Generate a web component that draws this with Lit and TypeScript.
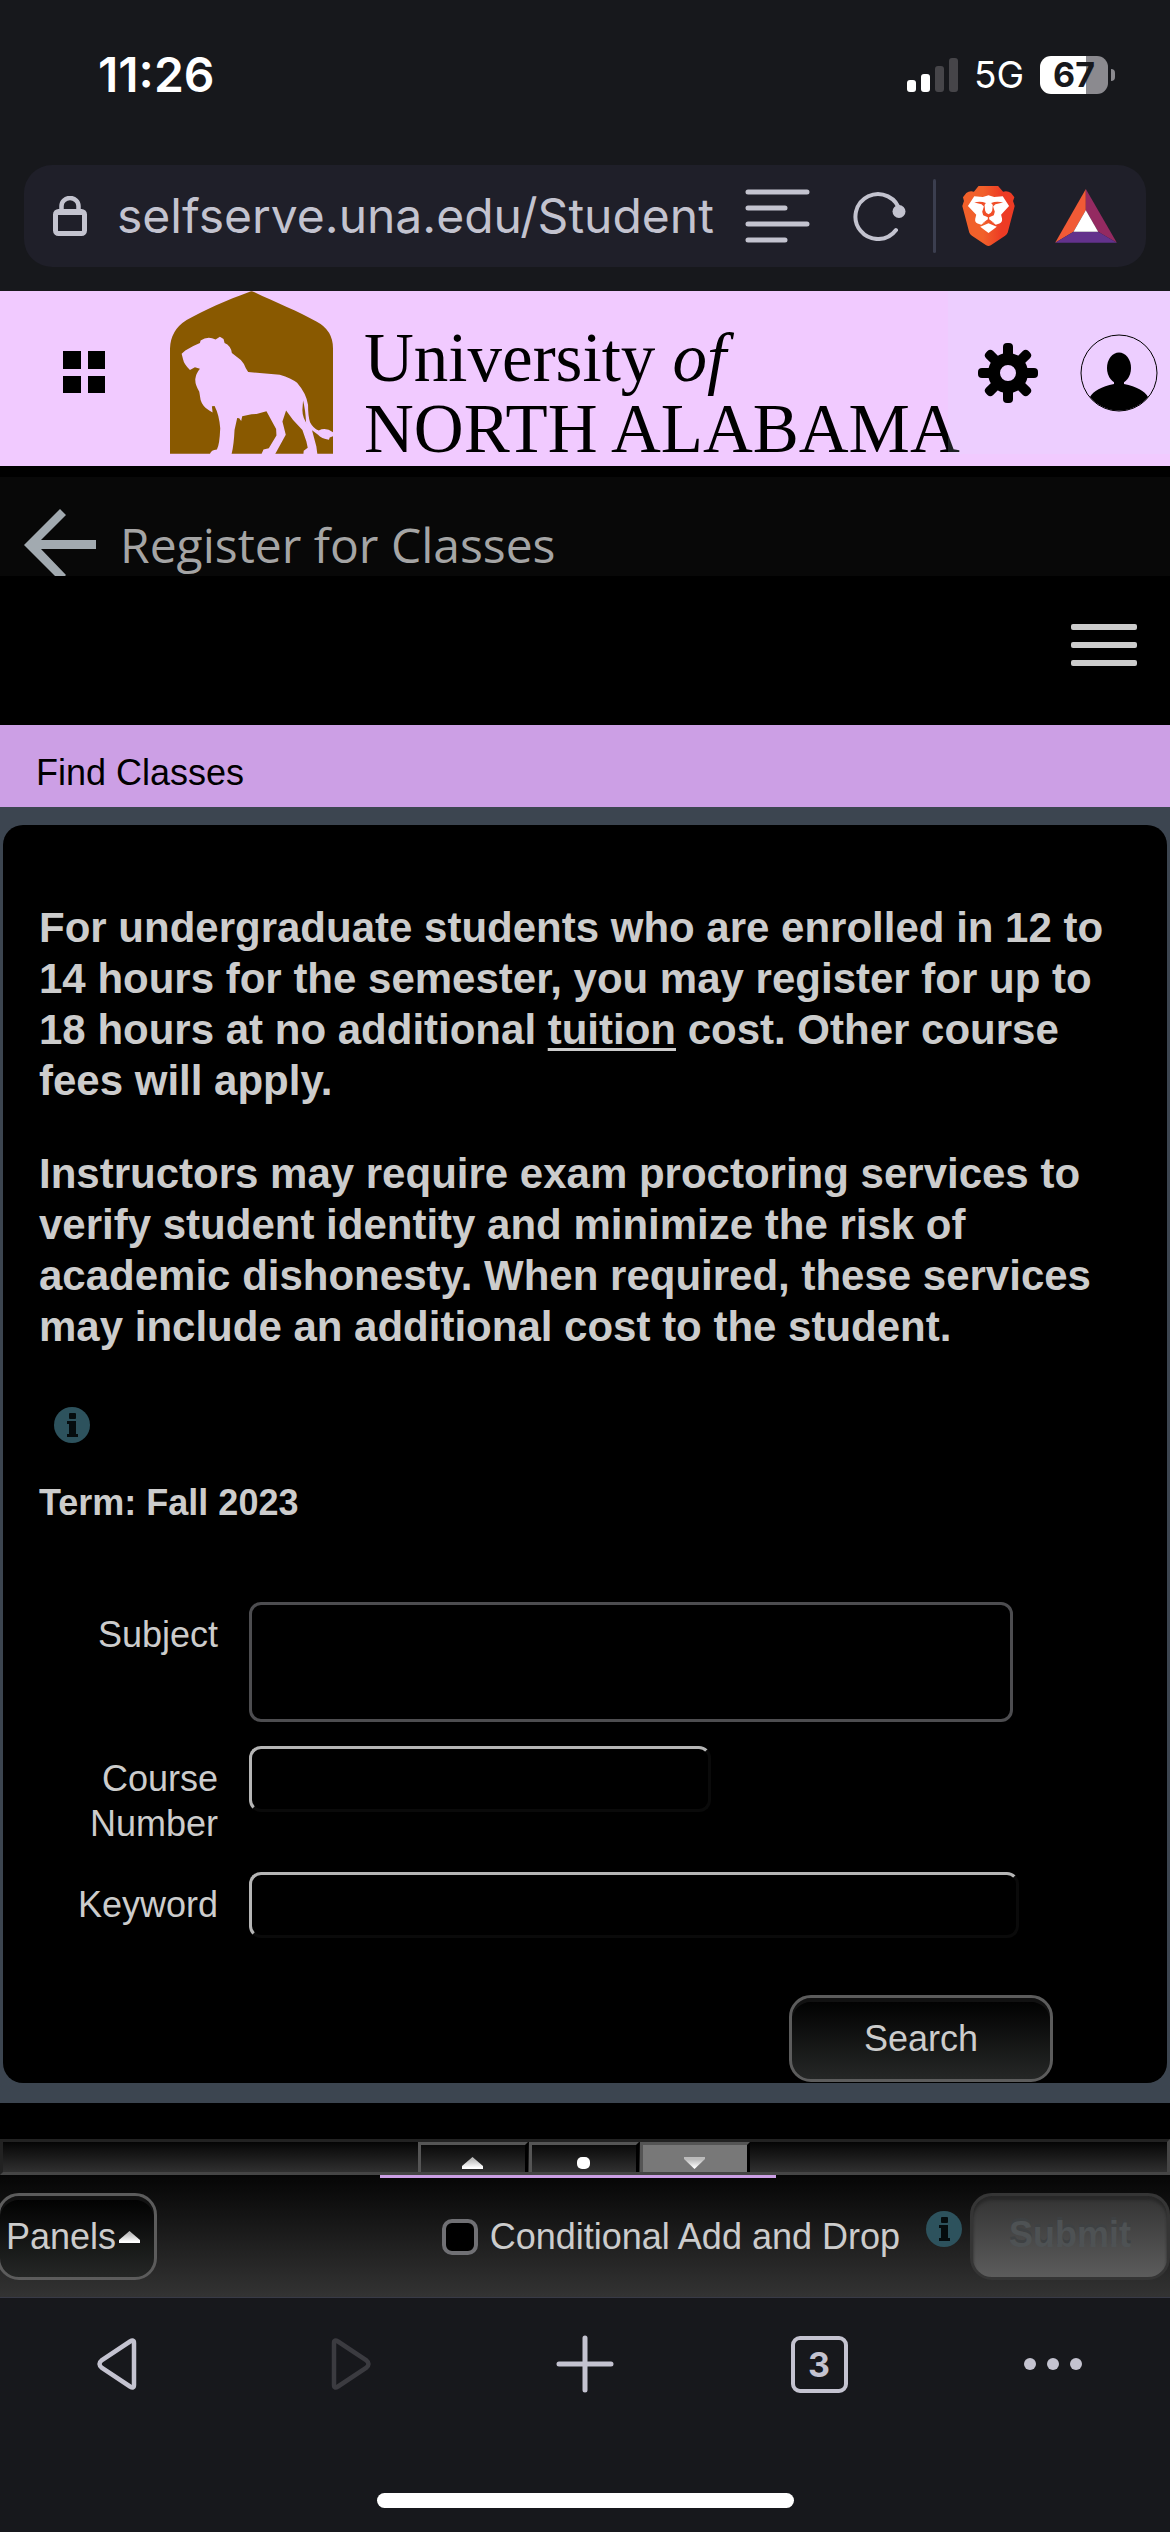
import { LitElement, html, css, svg } from "lit";
import { customElement, property, state } from "lit/decorators.js";

@customElement("info-icon")
export class InfoIcon extends LitElement {
  static styles = css`
    :host {
      display: block;
      width: 36px;
      height: 36px;
    }
    .icon {
      display: block;
      width: 100%;
      height: 100%;
    }
  `;

  render() {
    return html`<svg class="icon" viewBox="0 0 36 36" aria-hidden="true">
      <circle cx="18" cy="18" r="18" fill="#2d525d" />
      <rect x="15" y="6" width="7" height="6" rx="1" fill="#050c0e" />
      <path d="M13 14h9v13h2v3H13v-3h2V17h-2z" fill="#050c0e" />
    </svg>`;
  }
}

@customElement("phone-status")
export class PhoneStatus extends LitElement {
  static styles = css`
    :host {
      display: flex;
      align-items: center;
      justify-content: space-between;
      padding: 46px 55px 62px 98px;
      color: #fff;
      font-family: Inter, "Liberation Sans", sans-serif;
    }
    .time {
      font-size: 48px;
      line-height: 57px;
      font-weight: 600;
    }
    .side {
      display: flex;
      align-items: center;
      gap: 16px;
    }
    .signal {
      width: 51px;
      height: 34px;
    }
    .network {
      font-size: 37px;
      line-height: 46px;
    }
    .battery {
      display: flex;
      align-items: center;
      gap: 3px;
    }
    .level {
      width: 68px;
      border-radius: 11px;
      background: linear-gradient(90deg, #fff 68%, #8b8a8f 68%);
      color: #17181c;
      font-size: 34px;
      line-height: 38px;
      font-weight: 700;
      text-align: center;
    }
    .nub {
      width: 4px;
      height: 12px;
      border-radius: 0 4px 4px 0;
      background: #8b8a8f;
    }
  `;

  render() {
    return html`
      <span class="time">11:26</span>
      <div class="side">
        <svg class="signal" viewBox="0 0 51 34" aria-hidden="true">
          <rect x="0" y="22" width="9" height="12" rx="3" fill="#fff" />
          <rect x="14" y="16" width="9" height="18" rx="3" fill="#fff" />
          <rect x="28" y="8" width="9" height="26" rx="3" fill="#464549" />
          <rect x="42" y="0" width="9" height="34" rx="3" fill="#464549" />
        </svg>
        <span class="network">5G</span>
        <div class="battery">
          <span class="level">67</span>
          <span class="nub"></span>
        </div>
      </div>
    `;
  }
}

@customElement("address-bar")
export class AddressBar extends LitElement {
  static styles = css`
    :host {
      display: block;
      padding: 0 24px 24px;
    }
    .bar {
      display: flex;
      align-items: center;
      min-height: 102px;
      box-sizing: border-box;
      padding: 0 29px;
      border-radius: 28px;
      background: #1f1f29;
      color: #c3c3cf;
    }
    .lock {
      flex: none;
      width: 34px;
      height: 40px;
      margin-right: 30px;
    }
    .url {
      flex: 1;
      min-width: 0;
      padding: 0;
      border: 0;
      background: none;
      color: inherit;
      font-family: Inter, "Liberation Sans", sans-serif;
      font-size: 48px;
      line-height: 60px;
    }
    .tool {
      display: block;
      flex: none;
      padding: 0;
      border: 0;
      background: none;
      color: inherit;
    }
    .tool svg {
      display: block;
    }
    .reader {
      margin-right: 43px;
    }
    .divider {
      width: 3px;
      height: 74px;
      margin: 0 26px 0 27px;
      border-radius: 2px;
      background: #3b3e4f;
    }
    .shield {
      margin-right: 40px;
    }
  `;

  render() {
    return html`<div class="bar">
      <svg class="lock" viewBox="0 0 34 40" fill="none" stroke="currentColor" aria-hidden="true">
        <path d="M8.5 16V10a8.5 8 0 0 1 17 0v6" stroke-width="4.5" />
        <path d="M5 16h24" stroke-width="6" />
        <rect x="2.5" y="15.5" width="29" height="22" rx="3" stroke-width="5" />
      </svg>
      <input class="url" type="text" aria-label="Address" value="selfserve.una.edu/Student" />
      <button class="tool reader" aria-label="Reader">
        <svg width="65" height="54" viewBox="0 0 65 54" stroke="currentColor" stroke-width="5" stroke-linecap="round">
          <path d="M3 3h59M3 19h37M3 35h59M3 51h37" />
        </svg>
      </button>
      <button class="tool" aria-label="Reload">
        <svg width="53" height="50" viewBox="0 0 53 50">
          <path d="M47 21A22.5 22.5 0 1 0 43 39" fill="none" stroke="currentColor" stroke-width="4" stroke-linecap="round" />
          <circle cx="46" cy="20.5" r="6.5" fill="currentColor" />
        </svg>
      </button>
      <span class="divider"></span>
      <button class="tool shield" aria-label="Shields">
        <svg width="53" height="60" viewBox="186 467 158 181">
          <defs>
            <linearGradient id="mane" x1="0" x2="1" y1="0" y2="0">
              <stop offset="0.4" stop-color="#f1602a" />
              <stop offset="0.75" stop-color="#ed3b24" />
            </linearGradient>
          </defs>
          <path
            fill="url(#mane)"
            d="M235 467H294L309 484Q322 480 333 488L343 501L339 512L344 527L323 607Q321 613 315 617L272 646Q265 650 258 646L215 617Q209 613 207 607L186 527L191 512L188 501L198 488Q208 480 221 484Z"
          />
          <path
            fill="#fff"
            d="M222 498L248 500L265 495L282 500L308 498L327 527L303 554L306 566Q307 577 298 580L287 584L265 568L243 584L232 580Q223 577 225 566L228 554L203 527Z"
          />
          <path
            fill="#f04e28"
            d="M222 517Q240 511 257 518L253 524L255 542Q256 549 265 552Q274 549 276 542L278 524L273 518Q290 511 309 517L286 522L279 529L284 545L281 555L267 561V567L284 580L265 571L246 580L263 567V561L249 555L246 545L251 529L244 522Z"
          />
          <path fill="#fff" d="M240 590L265 579L290 590L265 609Z" />
        </svg>
      </button>
      <button class="tool" aria-label="Rewards">
        <svg width="62" height="54" viewBox="465 477 185 162">
          <path fill="#f15a36" d="M557 477L465 638L520 605L557 541Z" />
          <path fill="#942a61" d="M557 477L650 638L594 605L557 541Z" />
          <path fill="#63328c" d="M465 638L520 605H594L650 638Z" />
          <path fill="#fff" d="M557 541L520 605H594Z" />
        </svg>
      </button>
    </div>`;
  }
}

@customElement("site-header")
export class SiteHeader extends LitElement {
  static styles = css`
    :host {
      display: block;
    }
    .brand-bar {
      display: flex;
      align-items: flex-start;
      background: #f1caff;
    }
    .icon-button {
      display: block;
      flex: none;
      padding: 0;
      border: 0;
      background: none;
      color: #000;
    }
    .icon-button svg,
    .crest {
      display: block;
    }
    .apps {
      margin: 60px 65px 0 63px;
    }
    .crest {
      flex: none;
      width: 163px;
      height: 163px;
    }
    .name {
      flex: 1;
      min-width: 0;
      padding: 32px 0 1px 31px;
      color: #000;
      font-family: "Liberation Serif", "Times New Roman", serif;
      font-size: 69px;
      line-height: 71px;
      white-space: nowrap;
    }
    .name-line {
      display: block;
    }
    .actions {
      position: relative;
      display: flex;
      align-items: center;
      justify-content: space-between;
      flex: none;
      width: 222px;
      height: 163px;
      padding: 0 12px 0 30px;
      box-sizing: border-box;
      background: rgba(212, 236, 255, 0.14);
    }
    .title-bar {
      display: flex;
      align-items: flex-start;
      gap: 24px;
      height: 99px;
      padding: 32px 24px 0;
      margin-top: 11px;
      box-sizing: border-box;
      overflow: hidden;
      background: #080808;
    }
    .back {
      flex: none;
    }
    .title {
      margin: 0;
      color: #a5a5a5;
      font-family: "Open Sans", "Noto Sans", sans-serif;
      font-size: 48px;
      font-weight: 400;
      line-height: 72px;
    }
    .menu-bar {
      display: flex;
      justify-content: flex-end;
      padding: 48px 33px 59px;
    }
  `;

  render() {
    return html`
      <header class="brand-bar">
        <button class="icon-button apps" aria-label="Applications">
          <svg width="42" height="42" viewBox="0 0 42 42">
            <path d="M0 0h18v18H0zM25 0h17v18H25zM0 25h18v17H0zM25 25h17v17H25z" />
          </svg>
        </button>
        <svg class="crest" viewBox="30 18 490 489" role="img" aria-label="Lion crest">
          <path
            fill="#895900"
            d="M275 18Q278 18 284 21C345 50 420 80 470 109Q520 135 520 190V507H30V190Q32 135 80 105C130 75 205 43 266 21Q272 18 275 18Z"
          />
          <path
            fill="#f1caff"
            d="M65 206L76 196L100 183L120 174L122 166Q143 152 167 163L180 155L191 162L194 174Q213 182 216 204L243 225Q255 238 258 250L265 261L360 269Q395 280 412 293Q440 325 445 360Q445 395 451 412Q460 430 477 437Q498 426 520 442V454L510 458L508 465Q485 462 475 450L457 436L470 485L473 508H431L432 498L444 489L440 470L428 435L400 405L379 377L368 410L378 450L346 508H305L311 494L327 490L350 452L349 432L320 379L290 387L275 388L247 394L244 408L238 400L232 399L224 435Q222 480 215 508H150Q153 495 171 494Q179 480 181 430Q178 390 164 363L156 364L158 383L148 377Q128 365 122 345L118 320Q105 300 106 282Q108 265 120 251L105 247L90 255Q72 238 69 222Z"
          />
          <path fill="#895900" d="M430 347Q437 375 439 412L445 420Q428 400 428 375Z" />
        </svg>
        <div class="name">
          <span class="name-line">University <i>of</i></span>
          <span class="name-line">NORTH ALABAMA</span>
        </div>
        <div class="actions">
          <button class="icon-button" aria-label="Settings">
            <svg width="60" height="60" viewBox="0 0 60 60">
              <circle cx="30" cy="30" r="14" fill="none" stroke="#000" stroke-width="12" />
              ${[0, 45, 90, 135, 180, 225, 270, 315].map(
                (angle) =>
                  svg`<rect x="25" y="0" width="10" height="16" rx="4" transform="rotate(${angle} 30 30)" />`
              )}
            </svg>
          </button>
          <button class="icon-button" aria-label="Profile">
            <svg width="78" height="78" viewBox="0 0 78 78">
              <circle cx="39" cy="39" r="38" fill="none" stroke="#000" />
              <ellipse cx="39" cy="34" rx="12" ry="15.5" />
              <path d="M34 42V50Q15 54 10 63A38 38 0 0 0 68 63Q63 54 44 50V42Z" />
            </svg>
          </button>
        </div>
      </header>
      <div class="title-bar">
        <button class="icon-button back" aria-label="Back">
          <svg width="72" height="67" viewBox="0 0 72 67">
            <path d="M0 36L36 0L42 6L17 31H72V40H17L42 66L36 72Z" fill="#a2aab0" />
          </svg>
        </button>
        <h1 class="title">Register for Classes</h1>
      </div>
      <nav class="menu-bar">
        <button class="icon-button" aria-label="Menu">
          <svg width="66" height="42" viewBox="0 0 66 42" fill="#ccc">
            <rect y="0" width="66" height="6" rx="2" />
            <rect y="18" width="66" height="6" rx="2" />
            <rect y="36" width="66" height="6" rx="2" />
          </svg>
        </button>
      </nav>
    `;
  }
}

@customElement("class-search")
export class ClassSearch extends LitElement {
  static styles = css`
    :host {
      display: block;
      color: #ccc;
      font-size: 36px;
      line-height: 45px;
    }
    .tab {
      margin: 0;
      padding: 25px 36px 12px;
      background: #cc9fe5;
      color: #000;
      font-size: 36px;
      font-weight: 400;
      line-height: 45px;
    }
    .surround {
      padding: 18px 3px 20px;
      background: #3c4550;
    }
    .panel {
      padding: 77px 36px 1px;
      border-radius: 20px;
      background: #000;
    }
    .notice {
      margin: 0 0 42px;
      font-size: 42px;
      font-weight: 700;
      line-height: 51px;
    }
    .notice-link {
      color: inherit;
      text-decoration: underline;
      text-decoration-thickness: 3px;
      text-underline-offset: 4px;
      text-decoration-skip-ink: none;
    }
    .hint {
      display: block;
      margin: 55px 0 37px 15px;
    }
    .term {
      margin: 0 0 77px;
      font-weight: 700;
    }
    .fields {
      display: grid;
      grid-template-columns: 179px 1fr;
      column-gap: 31px;
      row-gap: 24px;
      align-items: start;
    }
    .label {
      padding: 10px 0 2px;
      text-align: right;
    }
    .field {
      max-width: 100%;
      box-sizing: border-box;
      height: 66px;
      padding: 0 12px;
      border: 3px solid #0a0a0a;
      border-top-color: #b5b5b5;
      border-left-color: #b5b5b5;
      border-radius: 12px;
      background: #000;
      color: inherit;
      font: inherit;
    }
    .subject {
      width: 764px;
      height: 120px;
      border-color: #4d4d50;
    }
    .course {
      width: 462px;
    }
    .keyword {
      width: 770px;
    }
    .submit-row {
      display: flex;
      justify-content: flex-end;
      padding: 57px 78px 0 0;
    }
    .search {
      min-width: 264px;
      height: 87px;
      border: 3px solid #5c5c5c;
      border-radius: 22px;
      background: linear-gradient(#000, #252726);
      box-shadow: inset 0 4px 0 #111;
      color: inherit;
      font: inherit;
    }
  `;

  render() {
    return html`
      <h2 class="tab">Find Classes</h2>
      <div class="surround">
        <form class="panel" @submit=${(e: Event) => e.preventDefault()}>
          <p class="notice">
            For undergraduate students who are enrolled in 12 to 14 hours for the semester, you may
            register for up to 18 hours at no additional
            <a class="notice-link" href="#tuition">tuition</a> cost. Other course fees will apply.
          </p>
          <p class="notice">
            Instructors may require exam proctoring services to verify student identity and minimize
            the risk of academic dishonesty. When required, these services may include an additional
            cost to the student.
          </p>
          <info-icon class="hint"></info-icon>
          <p class="term">Term: Fall 2023</p>
          <div class="fields">
            <label class="label" for="subject">Subject</label>
            <input class="field subject" id="subject" type="text" />
            <label class="label" for="course">Course Number</label>
            <input class="field course" id="course" type="text" />
            <label class="label" for="keyword">Keyword</label>
            <input class="field keyword" id="keyword" type="text" />
          </div>
          <div class="submit-row">
            <button class="search" type="submit">Search</button>
          </div>
        </form>
      </div>
    `;
  }
}

@customElement("panel-toolbar")
export class PanelToolbar extends LitElement {
  @state() private active = 2;

  static styles = css`
    :host {
      display: block;
      padding-top: 36px;
      color: #ccc;
      font-size: 36px;
      line-height: 45px;
    }
    .splitter {
      display: flex;
      justify-content: center;
      gap: 1px;
      padding-right: 3px;
      border: 3px solid #454545;
      border-top-color: #222;
      border-left-color: #222;
      background: linear-gradient(#050505, #303030);
    }
    .split {
      display: flex;
      justify-content: center;
      width: 110px;
      height: 30px;
      padding: 12px 0 0;
      box-sizing: border-box;
      border: 3px solid #555;
      border-right-color: #000;
      border-bottom: 0;
      background: none;
    }
    .split-active {
      background: #787878;
    }
    .glyph {
      display: block;
      width: 21px;
      height: 12px;
    }
    .tools {
      display: flex;
      flex-direction: column;
      align-items: center;
      background: linear-gradient(#050505, #333);
      border-bottom: 1px solid #383a47;
    }
    .marker {
      width: 396px;
      max-width: 100%;
      height: 3px;
      margin-right: 14px;
      background: #cc9fe5;
    }
    .row {
      display: flex;
      align-items: center;
      align-self: stretch;
      padding: 15px 0 17px;
      overflow: hidden;
    }
    .panels {
      display: flex;
      align-items: center;
      gap: 3px;
      height: 87px;
      margin-left: -3px;
      padding: 0 14px 0 6px;
      border: 3px solid #5c5c5c;
      border-radius: 22px;
      background: linear-gradient(#000, #252726);
      box-shadow: inset 0 4px 0 #111;
      color: inherit;
      font: inherit;
    }
    .conditional {
      display: flex;
      align-items: center;
      gap: 12px;
      margin: 0 26px 0 auto;
    }
    .check {
      appearance: none;
      width: 36px;
      height: 36px;
      margin: 0;
      border: 4px solid #707074;
      border-radius: 10px;
      background: #000;
    }
    .help {
      margin: 0 8px 15px 0;
    }
    .submit {
      width: 200px;
      height: 87px;
      padding: 0 0 4px;
      border: 3px solid #353535;
      border-radius: 22px;
      background: linear-gradient(#333, #5c5c5c);
      box-shadow: inset 0 4px 3px #282828;
      color: #4e5254;
      font: inherit;
      font-weight: 700;
      text-shadow: 0 -3px 0 #3e4143;
    }
  `;

  private glyph(kind: string) {
    const shape =
      kind === "up"
        ? svg`<path d="M10.5 0L21 9V12H0V9Z" fill="url(#shine)" />`
        : kind === "down"
          ? svg`<path d="M0 0H21V2L10.5 12L0 2Z" fill="url(#shine)" />`
          : svg`<rect x="4" width="13" height="12" rx="5" fill="#fff" />`;
    return html`<svg class="glyph" viewBox="0 0 21 12" aria-hidden="true">
      <defs>
        <linearGradient id="shine" x1="0" x2="0" y1="0" y2="1">
          <stop offset="0.2" stop-color="#bbb" />
          <stop offset="0.9" stop-color="#fff" />
        </linearGradient>
      </defs>
      ${shape}
    </svg>`;
  }

  render() {
    return html`
      <div class="splitter">
        ${["up", "dot", "down"].map(
          (kind, index) => html`<button
            class="split ${index === this.active ? "split-active" : ""}"
            aria-label="Panel position ${kind}"
            @click=${() => (this.active = index)}
          >
            ${this.glyph(kind)}
          </button>`
        )}
      </div>
      <div class="tools">
        <span class="marker"></span>
        <div class="row">
          <button class="panels">Panels${this.glyph("up")}</button>
          <label class="conditional">
            <input class="check" type="checkbox" />
            <span>Conditional Add and Drop</span>
          </label>
          <info-icon class="help"></info-icon>
          <button class="submit">Submit</button>
        </div>
      </div>
    `;
  }
}

@customElement("browser-nav")
export class BrowserNav extends LitElement {
  @property({ type: Number }) tabs = 3;

  static styles = css`
    :host {
      display: block;
      padding: 36px 0 24px;
      color: #c4c3d0;
      font-family: Inter, "Liberation Sans", sans-serif;
    }
    .buttons {
      display: grid;
      grid-template-columns: repeat(5, 1fr);
      justify-items: center;
      align-items: center;
      height: 60px;
    }
    .button {
      display: block;
      padding: 0;
      border: 0;
      background: none;
      color: inherit;
    }
    .button svg {
      display: block;
    }
    .button.muted {
      color: #3b3b40;
    }
    .button.tabs {
      width: 57px;
      height: 57px;
      border: 4px solid currentColor;
      border-radius: 9px;
      font-family: inherit;
      font-size: 34px;
      font-weight: 700;
      line-height: 49px;
    }
    .home {
      width: 417px;
      max-width: 60%;
      height: 15px;
      margin: 99px auto 0;
      border-radius: 8px;
      background: #fff;
    }
  `;

  render() {
    return html`
      <nav class="buttons">
        <button class="button" aria-label="Back">
          <svg width="40" height="52" viewBox="0 0 40 52" fill="none" stroke="currentColor" stroke-width="4.5">
            <path d="M37 5V47Q37 51 33 48.5L5 30Q0 26 5 22L33 3.5Q37 1 37 5Z" />
          </svg>
        </button>
        <button class="button muted" aria-label="Forward" disabled>
          <svg width="40" height="52" viewBox="0 0 40 52" fill="none" stroke="currentColor" stroke-width="4.5">
            <path d="M3 5V47Q3 51 7 48.5L35 30Q40 26 35 22L7 3.5Q3 1 3 5Z" />
          </svg>
        </button>
        <button class="button" aria-label="New tab">
          <svg width="58" height="58" viewBox="0 0 58 58" stroke="currentColor" stroke-width="5" stroke-linecap="round">
            <path d="M29 3V55M3 29H55" />
          </svg>
        </button>
        <button class="button tabs" aria-label="Tabs">${this.tabs}</button>
        <button class="button" aria-label="More">
          <svg width="60" height="14" viewBox="0 0 60 14" fill="currentColor">
            <circle cx="7" cy="7" r="6" />
            <circle cx="30" cy="7" r="6" />
            <circle cx="53" cy="7" r="6" />
          </svg>
        </button>
      </nav>
      <div class="home"></div>
    `;
  }
}

@customElement("app-root")
export class AppRoot extends LitElement {
  static styles = css`
    :host {
      display: block;
      min-height: 100vh;
      background: #17181c;
      font-family: "Liberation Sans", Arial, sans-serif;
    }
    .page {
      background: #000;
    }
  `;

  render() {
    return html`
      <phone-status></phone-status>
      <address-bar></address-bar>
      <main class="page">
        <site-header></site-header>
        <class-search></class-search>
        <panel-toolbar></panel-toolbar>
      </main>
      <browser-nav></browser-nav>
    `;
  }
}
